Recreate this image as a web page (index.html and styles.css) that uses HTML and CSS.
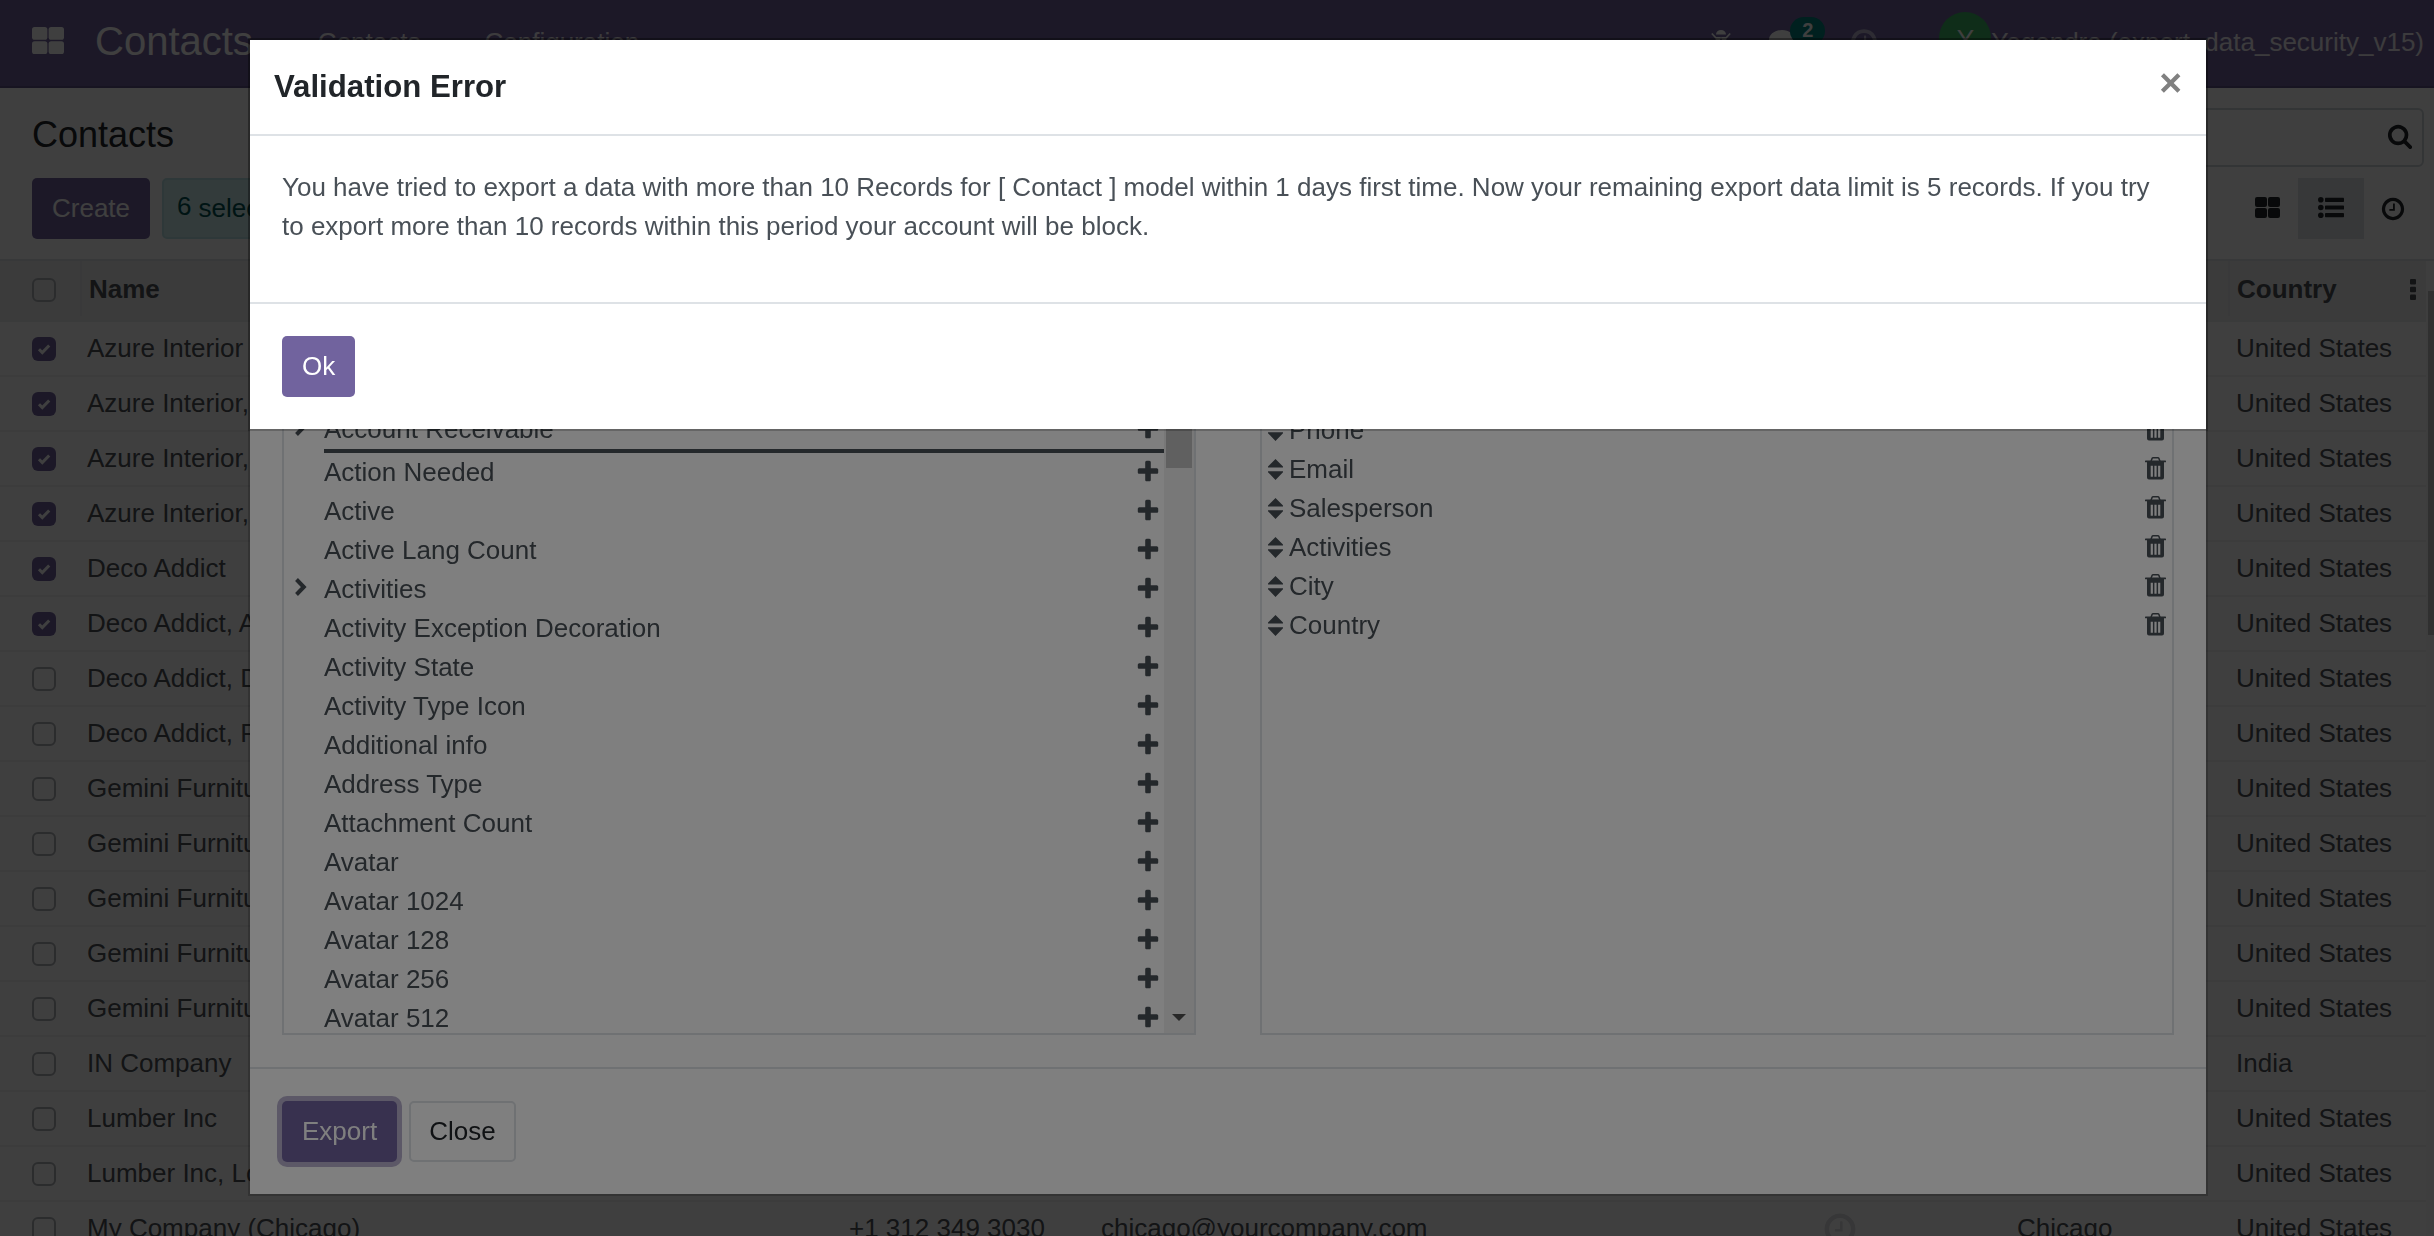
FILE: index.html
```html
<!DOCTYPE html>
<html lang="en">
<head>
<meta charset="utf-8">
<title>Contacts</title>
<link rel="stylesheet" href="styles.css">
</head>
<body>
<svg class="sprite" aria-hidden="true">
  <symbol id="plus" viewBox="0 0 1792 1792"><path d="M1600 736v192q0 40-28 68t-68 28h-416v416q0 40-28 68t-68 28h-192q-40 0-68-28t-28-68v-416h-416q-40 0-68-28t-28-68v-192q0-40 28-68t68-28h416v-416q0-40 28-68t68-28h192q40 0 68 28t28 68v416h416q40 0 68 28t28 68z"/></symbol>
  <symbol id="trash" viewBox="0 0 21 23"><path d="M6 4.200L7.200 1.200Q7.500.8 8 .8h5q.5 0 .8.4L15 4.200" fill="none" stroke="currentColor" stroke-width="1.500"/><rect y="3.600" width="21" height="1.700" rx=".6"/><path fill-rule="evenodd" d="M2 5h17v15.500q0 2-2 2H4q-2 0-2-2zM5.700 8.800v11h2.200v-11zM9.400 8.800v11h2.200v-11zM13.100 8.800v11h2.200v-11z"/></symbol>
  <symbol id="search" viewBox="0 0 1792 1792"><path d="M1216 832q0-185-131.500-316.500t-316.500-131.500-316.500 131.500-131.500 316.500 131.500 316.500 316.500 131.500 316.500-131.500 131.500-316.500zm512 832q0 52-38 90t-90 38q-54 0-90-38l-343-342q-179 124-399 124-143 0-273.500-55.500t-225-150-150-225-55.500-273.500 55.500-273.500 150-225 225-150 273.500-55.500 273.500 55.500 225 150 150 225 55.500 273.500q0 220-124 399l343 343q37 37 37 90z"/></symbol>
  <symbol id="clock" viewBox="0 0 1792 1792"><path d="M1024 544v448q0 14-9 23t-23 9h-320q-14 0-23-9t-9-23v-64q0-14 9-23t23-9h224v-352q0-14 9-23t23-9h64q14 0 23 9t9 23zm416 352q0-148-73-273t-198-198-273-73-273 73-198 198-73 273 73 273 198 198 273 73 273-73 198-198 73-273zm224 0q0 209-103 385.500t-279.500 279.500-385.500 103-385.500-103-279.500-279.500-103-385.500 103-385.500 279.500-279.500 385.500-103 385.500 103 279.500 279.500 103 385.500z"/></symbol>
  <symbol id="grid" viewBox="0 0 50 42"><rect width="24" height="20" rx="4"/><rect x="26" width="24" height="20" rx="4"/><rect y="22" width="24" height="20" rx="4"/><rect x="26" y="22" width="24" height="20" rx="4"/></symbol>
  <symbol id="list" viewBox="0 0 26 21"><circle cx="2.800" cy="2.800" r="2.800"/><circle cx="2.800" cy="10.500" r="2.800"/><circle cx="2.800" cy="18.200" r="2.800"/><rect x="7" y=".8" width="19" height="4.200" rx=".7"/><rect x="7" y="8.400" width="19" height="4.200" rx=".7"/><rect x="7" y="16" width="19" height="4.200" rx=".7"/></symbol>
  <symbol id="check" viewBox="0 0 24 24"><path d="M7 12.300l3.300 3.300 6.900-7.100" fill="none" stroke="currentColor" stroke-width="3"/></symbol>
  <symbol id="chevron" viewBox="0 0 12 18"><path d="M1.500 1.500l7.300 7.500-7.300 7.500" fill="none" stroke="currentColor" stroke-width="4"/></symbol>
  <symbol id="sort" viewBox="0 0 15 21"><path d="M7.500 0L15 7.600v1H0v-1zM0 12.200h15v1L7.500 21 0 13.200z"/></symbol>
  <symbol id="bug" viewBox="0 0 20 24"><path d="M5 4.500a5 4.500 0 0 1 10 0zM5 7h4.200v13A6 6 0 0 1 4 14zM10.800 7H15l1 7a6 6 0 0 1-5.200 6z"/><path d="M.8 3.500L5 8h10l4.200-4.500M0 13h4M16 13h4M5 17l-3 4M15 17l3 4" fill="none" stroke="currentColor" stroke-width="1.700"/></symbol>
  <symbol id="chat" viewBox="0 0 26 24"><path d="M13 0c7 0 13 4.500 13 10s-6 10-13 10c-1 0-2 0-3-.3C7 22 4 23.500 1 23.500c1.500-1.500 2.500-3 2.700-5C1.500 16.500 0 13.500 0 10 0 4.500 6 0 13 0z"/></symbol>
  <symbol id="dots" viewBox="0 0 6 21"><rect width="6" height="5.400" rx="1"/><rect y="7.800" width="6" height="5.400" rx="1"/><rect y="15.600" width="6" height="5.400" rx="1"/></symbol>
</svg>

<header class="navbar">
  <svg class="apps"><use href="#grid"/></svg>
  <span class="brand">Contacts</span>
  <nav class="menu"><span>Contacts</span><span>Configuration</span></nav>
  <div class="systray">
    <svg class="bug"><use href="#bug"/></svg>
    <div class="chat"><svg><use href="#chat"/></svg><b class="badge">2</b></div>
    <svg class="nav-clock"><use href="#clock"/></svg>
    <span class="avatar">Y</span>
    <span class="user">Yogendra (export_data_security_v15)</span>
  </div>
</header>

<section class="control">
  <div class="control-row top">
    <h1>Contacts</h1>
    <div class="searchbox"><svg class="glass"><use href="#search"/></svg></div>
  </div>
  <div class="control-row">
    <button class="btn primary">Create</button>
    <div class="selection"><span class="count">6</span> <span>selected</span></div>
    <div class="views">
      <span class="view"><svg class="kanban"><use href="#grid"/></svg></span>
      <span class="view active"><svg class="list"><use href="#list"/></svg></span>
      <span class="view"><svg class="clock"><use href="#clock"/></svg></span>
    </div>
  </div>
</section>

<main class="table-wrap">
  <div class="table">
    <div class="row head"><span class="cell"><i class="box"></i></span><span class="cell name">Name</span><span></span><span></span><span></span><span></span><span class="cell country">Country<svg class="dots"><use href="#dots"/></svg></span></div>
    <div class="row"><span><i class="box on"><svg><use href="#check"/></svg></i></span><span>Azure Interior</span><span></span><span></span><span></span><span></span><span>United States</span></div>
    <div class="row"><span><i class="box on"><svg><use href="#check"/></svg></i></span><span>Azure Interior, Brandon Freeman</span><span></span><span></span><span></span><span></span><span>United States</span></div>
    <div class="row"><span><i class="box on"><svg><use href="#check"/></svg></i></span><span>Azure Interior, Colleen Diaz</span><span></span><span></span><span></span><span></span><span>United States</span></div>
    <div class="row"><span><i class="box on"><svg><use href="#check"/></svg></i></span><span>Azure Interior, Nicole Ford</span><span></span><span></span><span></span><span></span><span>United States</span></div>
    <div class="row"><span><i class="box on"><svg><use href="#check"/></svg></i></span><span>Deco Addict</span><span></span><span></span><span></span><span></span><span>United States</span></div>
    <div class="row"><span><i class="box on"><svg><use href="#check"/></svg></i></span><span>Deco Addict, Addison Olson</span><span></span><span></span><span></span><span></span><span>United States</span></div>
    <div class="row"><span><i class="box"></i></span><span>Deco Addict, Douglas Fletcher</span><span></span><span></span><span></span><span></span><span>United States</span></div>
    <div class="row"><span><i class="box"></i></span><span>Deco Addict, Floyd Steward</span><span></span><span></span><span></span><span></span><span>United States</span></div>
    <div class="row"><span><i class="box"></i></span><span>Gemini Furniture</span><span></span><span></span><span></span><span></span><span>United States</span></div>
    <div class="row"><span><i class="box"></i></span><span>Gemini Furniture, Edwin Hansen</span><span></span><span></span><span></span><span></span><span>United States</span></div>
    <div class="row"><span><i class="box"></i></span><span>Gemini Furniture, Jesse Brown</span><span></span><span></span><span></span><span></span><span>United States</span></div>
    <div class="row"><span><i class="box"></i></span><span>Gemini Furniture, Oscar Morgan</span><span></span><span></span><span></span><span></span><span>United States</span></div>
    <div class="row"><span><i class="box"></i></span><span>Gemini Furniture, Soham Palmer</span><span></span><span></span><span></span><span></span><span>United States</span></div>
    <div class="row"><span><i class="box"></i></span><span>IN Company</span><span></span><span></span><span></span><span></span><span>India</span></div>
    <div class="row"><span><i class="box"></i></span><span>Lumber Inc</span><span></span><span></span><span></span><span></span><span>United States</span></div>
    <div class="row"><span><i class="box"></i></span><span>Lumber Inc, Lorraine Douglas</span><span></span><span></span><span></span><span></span><span>United States</span></div>
    <div class="row"><span><i class="box"></i></span><span>My Company (Chicago)</span><span>+1 312 349 3030</span><span>chicago@yourcompany.com</span><span><svg class="activity"><use href="#clock"/></svg></span><span>Chicago</span><span>United States</span></div>
  </div>
  <div class="page-scroll"><div class="page-thumb"></div></div>
</main>

<div class="backdrop">
  <div class="modal export">
    <div class="panels">
      <div class="panel fields">
        <div class="field-list">
          <div class="field"><svg class="chev"><use href="#chevron"/></svg><span>Account Payable</span><svg class="add"><use href="#plus"/></svg></div>
          <div class="field"><svg class="chev"><use href="#chevron"/></svg><span>Account Receivable</span><svg class="add"><use href="#plus"/></svg></div>
          <div class="separator"></div>
          <div class="field"><span>Action Needed</span><svg class="add"><use href="#plus"/></svg></div>
          <div class="field"><span>Active</span><svg class="add"><use href="#plus"/></svg></div>
          <div class="field"><span>Active Lang Count</span><svg class="add"><use href="#plus"/></svg></div>
          <div class="field"><svg class="chev"><use href="#chevron"/></svg><span>Activities</span><svg class="add"><use href="#plus"/></svg></div>
          <div class="field"><span>Activity Exception Decoration</span><svg class="add"><use href="#plus"/></svg></div>
          <div class="field"><span>Activity State</span><svg class="add"><use href="#plus"/></svg></div>
          <div class="field"><span>Activity Type Icon</span><svg class="add"><use href="#plus"/></svg></div>
          <div class="field"><span>Additional info</span><svg class="add"><use href="#plus"/></svg></div>
          <div class="field"><span>Address Type</span><svg class="add"><use href="#plus"/></svg></div>
          <div class="field"><span>Attachment Count</span><svg class="add"><use href="#plus"/></svg></div>
          <div class="field"><span>Avatar</span><svg class="add"><use href="#plus"/></svg></div>
          <div class="field"><span>Avatar 1024</span><svg class="add"><use href="#plus"/></svg></div>
          <div class="field"><span>Avatar 128</span><svg class="add"><use href="#plus"/></svg></div>
          <div class="field"><span>Avatar 256</span><svg class="add"><use href="#plus"/></svg></div>
          <div class="field"><span>Avatar 512</span><svg class="add"><use href="#plus"/></svg></div>
        </div>
        <div class="scrollbar"><div class="thumb"></div><div class="arrow"></div></div>
      </div>
      <div class="panel chosen">
        <div class="pick"><svg class="sort"><use href="#sort"/></svg><span>Name</span><svg class="remove"><use href="#trash"/></svg></div>
        <div class="pick"><svg class="sort"><use href="#sort"/></svg><span>Phone</span><svg class="remove"><use href="#trash"/></svg></div>
        <div class="pick"><svg class="sort"><use href="#sort"/></svg><span>Email</span><svg class="remove"><use href="#trash"/></svg></div>
        <div class="pick"><svg class="sort"><use href="#sort"/></svg><span>Salesperson</span><svg class="remove"><use href="#trash"/></svg></div>
        <div class="pick"><svg class="sort"><use href="#sort"/></svg><span>Activities</span><svg class="remove"><use href="#trash"/></svg></div>
        <div class="pick"><svg class="sort"><use href="#sort"/></svg><span>City</span><svg class="remove"><use href="#trash"/></svg></div>
        <div class="pick"><svg class="sort"><use href="#sort"/></svg><span>Country</span><svg class="remove"><use href="#trash"/></svg></div>
      </div>
    </div>
    <footer class="modal-footer"><button class="btn primary focus">Export</button><button class="btn secondary">Close</button></footer>
  </div>
</div>

<div class="backdrop">
  <div class="modal">
    <header class="modal-header"><h2>Validation Error</h2><span class="close">×</span></header>
    <div class="modal-body"><p>You have tried to export a data with more than 10 Records for [ Contact ] model within 1 days first time. Now your remaining export data limit is 5 records. If you try to export more than 10 records within this period your account will be block.</p></div>
    <footer class="modal-footer"><button class="btn primary">Ok</button></footer>
  </div>
</div>
</body>
</html>
```

FILE: styles.css
```css
* { box-sizing: border-box; }
html, body { height: 100%; overflow: hidden; }
body {
  margin: 0;
  display: flex;
  flex-direction: column;
  font: 26px/39px "Liberation Sans", Arial, sans-serif;
  color: #4c5057;
  background: #fff;
}
h1, h2, p { margin: 0; }
svg { fill: currentColor; flex: none; display: block; }
.sprite { position: absolute; width: 0; height: 0; }

/* Top bar */
.navbar {
  flex: none;
  height: 88px;
  padding: 0 10px 2px 32px;
  display: flex;
  align-items: center;
  color: #fff;
  background: #71639e;
  border-bottom: 2px solid #5f5385;
  white-space: nowrap;
}
.apps { width: 32px; height: 27px; margin-top: -3px; }
.brand { font-size: 40px; margin: -1px 0 0 31px; }
.menu { display: flex; gap: 64px; margin-left: 65px; opacity: .9; }
.systray { margin-left: auto; display: flex; align-items: center; }
.bug { width: 20px; height: 24px; margin-top: -1px; }
.chat { position: relative; margin-left: 38px; }
.chat svg { width: 26px; height: 24px; }
.badge {
  position: absolute;
  left: 21px;
  top: -13px;
  width: 35px;
  height: 28px;
  border-radius: 14px;
  background: #00807c;
  font-size: 20px;
  line-height: 27px;
  text-align: center;
}
.nav-clock { width: 30px; height: 30px; margin-left: 54px; opacity: .5; }
.avatar {
  width: 52px;
  height: 52px;
  margin: -8px 0 0 60px;
  border-radius: 50%;
  background: #3cb464;
  font-size: 26px;
  line-height: 54px;
  text-align: center;
}
.user { opacity: .9; }

/* Control panel */
.control {
  flex: none;
  height: 173px;
  padding: 20px 10px 0 32px;
  border-bottom: 2px solid #dee2e6;
}
.control-row { display: flex; align-items: center; height: 61px; }
.control-row.top { height: 59px; margin-bottom: 11px; justify-content: space-between; }
h1 { font-size: 36px; font-weight: 400; color: #212529; margin-top: -6px; }
.searchbox {
  width: 1190px;
  height: 59px;
  padding-right: 9px;
  display: flex;
  align-items: center;
  justify-content: flex-end;
  border: 2px solid #ced4da;
  border-radius: 6px;
  color: #212529;
}
.glass { width: 26px; height: 26px; margin-top: -3px; }
.btn {
  height: 61px;
  padding: 0 20px;
  border: 0;
  border-radius: 5px;
  font: inherit;
}
.primary { background: #71639e; color: #fff; }
.secondary { background: transparent; color: #212529; padding: 0 18px; border: 2px solid #dee2e6; }
.focus { box-shadow: 0 0 0 5px rgba(113, 99, 158, .5); }
.selection {
  width: 330px;
  height: 61px;
  margin-left: 12px;
  padding-left: 13px;
  display: flex;
  gap: 7px;
  align-items: center;
  background: #ccecee;
  border: 2px solid #b8e2e4;
  border-radius: 5px;
  color: #005350;
}
.count { margin-top: -4px; }
.views { margin-left: auto; display: flex; height: 61px; background: #fcfcfd; }
.view { width: 60px; padding-bottom: 2px; display: flex; align-items: center; justify-content: center; color: #23272b; }
.view.active { width: 66px; background: #dee2e6; }
.kanban { width: 25px; height: 21px; margin-left: -2px; }
.list { width: 26px; height: 21px; }
.clock { width: 26px; height: 26px; margin: 2px 0 0 -2px; }

/* Records */
.table-wrap { flex: 1; min-height: 0; display: flex; overflow: hidden; }
.table { width: 2426px; flex: none; }
.row {
  height: 55px;
  display: grid;
  grid-template-columns: 87px 762px 252px 721px 195px 219px 190px;
  align-items: center;
  border-bottom: 2px solid #f0f1f3;
  white-space: nowrap;
  color: #4c5057;
}
.row > :first-child { padding-left: 32px; }
.row.head {
  grid-template-columns: 82px 767px 252px 720px 196px 211px 198px;
  height: 61px;
  background: #eeeeee;
  border-bottom-color: #e9ecec;
  font-weight: 700;
}
.head .cell { height: 55px; margin-top: -4px; padding-top: 2px; display: flex; align-items: center; border-right: 2px solid #e4e6e8; }
.head .name { border: 0; padding-left: 7px; }
.head .country { border-right: 0; border-left: 2px solid #e4e6e8; padding: 2px 10px 0 7px; justify-content: space-between; }
.dots { width: 6px; height: 21px; }
.box { display: block; width: 24px; height: 24px; border: 2px solid #adb0b5; border-radius: 6px; }
.box.on { border: 0; background: #71639e; color: #fff; }
.box svg { width: 24px; height: 24px; }
.activity { width: 36px; height: 36px; color: #dcdde0; }
.page-scroll { flex: 1; padding: 30px 0 0 2px; background: #fafafa; }
.page-thumb { height: 344px; background: #c1c1c1; }

/* Dialogs */
.backdrop {
  position: fixed;
  inset: 0;
  display: flex;
  align-items: flex-start;
  padding: 40px 228px 0 250px;
  background: rgba(0, 0, 0, .5);
}
.modal { flex: 1; background: #fff; box-shadow: 0 0 0 2px rgba(0, 0, 0, .2); }
.modal-header {
  height: 96px;
  padding: 0 24px;
  display: flex;
  align-items: center;
  justify-content: space-between;
  border-bottom: 2px solid #dee2e6;
  color: #212529;
}
h2 { font-size: 31.200px; line-height: 46px; }
.close { font-size: 39px; font-weight: 700; color: #808080; margin-top: -10px; }
.modal-body { padding: 32px 32px 56px; color: #495057; }
.modal-footer { display: flex; gap: 12px; padding: 32px; border-top: 2px solid #dee2e6; }
.export { height: 1154px; display: flex; flex-direction: column; color: #495057; }
.panels { flex: 1; min-height: 0; display: flex; gap: 64px; padding: 328px 32px 32px; }
.panel { flex: 1; border: 2px solid #dee2e6; overflow: hidden; }
.fields { display: flex; }
.field-list { flex: 1; padding-top: 1px; }
.field { height: 39px; display: flex; align-items: center; padding: 0 3px 0 40px; }
.add { width: 26px; height: 26px; margin: -2px 0 0 auto; }
.chev { width: 12px; height: 18px; margin: -5px 17px 0 -29px; }
.separator { height: 4px; margin-left: 40px; background: #495057; }
.scrollbar {
  width: 30px;
  padding: 0 2px;
  display: flex;
  flex-direction: column;
  justify-content: space-between;
  align-items: center;
  background: #f1f1f1;
}
.thumb { width: 26px; height: 98px; background: #c1c1c1; }
.arrow { border: 7px solid transparent; border-top-color: #505050; border-bottom: 0; margin-bottom: 12px; }
.chosen { padding-top: 2px; }
.pick { height: 39px; display: flex; align-items: center; padding: 0 6px; }
.remove { width: 21px; height: 23px; margin: -2px 0 0 auto; }
.sort { width: 15px; height: 21px; margin: -1px 6px 0 0; }
```
